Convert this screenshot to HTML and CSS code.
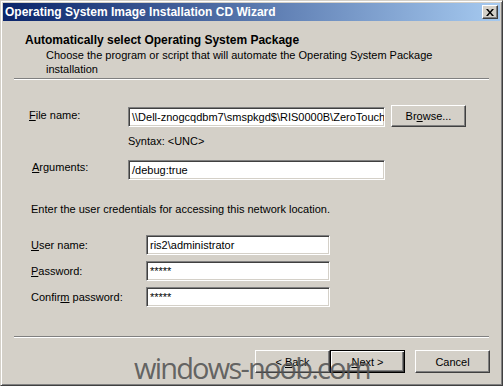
FILE: index.html
```html
<!DOCTYPE html>
<html lang="en">

<head>
    <meta charset="UTF-8">
    <title>Operating System Image Installation CD Wizard</title>
    <link rel="stylesheet" href="styles.css">
</head>

<body>
    <div class="window">
        <div class="title-bar">
            <span class="title-text">Operating System Image Installation CD Wizard</span>
            <span class="close-btn">
                <svg width="8" height="7" viewBox="0 0 8 7">
                    <path d="M0 0h2l2 2.5 2-2.5h2l-3 3.5 3 3.5h-2l-2-2.5-2 2.5h-2l3-3.5z" fill="#000"/>
                </svg>
            </span>
        </div>

        <div class="header">
            <h1>Automatically select Operating System Package</h1>
            <p>Choose the program or script that will automate the Operating System Package installation</p>
        </div>
        <div class="separator"></div>

        <div class="body">
            <div class="row file-row">
                <label class="lbl"><u>F</u>ile name:</label>
                <div class="field wide">\\Dell-znogcqdbm7\smspkgd$\RIS0000B\ZeroTouch</div>
                <button class="btn browse">Br<u>o</u>wse...</button>
            </div>
            <div class="hint">Syntax: &lt;UNC&gt;</div>
            <div class="row args-row">
                <label class="lbl"><u>A</u>rguments:</label>
                <div class="field wide">/debug:true</div>
            </div>

            <p class="creds-note">Enter the user credentials for accessing this network location.</p>

            <div class="creds">
                <label class="lbl"><u>U</u>ser name:</label>
                <div class="field short">ris2\administrator</div>
                <label class="lbl"><u>P</u>assword:</label>
                <div class="field short">*****</div>
                <label class="lbl">Confir<u>m</u> password:</label>
                <div class="field short">*****</div>
            </div>
        </div>

        <div class="separator"></div>

        <div class="footer">
            <button class="btn">&lt; <u>B</u>ack</button>
            <button class="btn default"><u>N</u>ext &gt;</button>
            <button class="btn cancel">Cancel</button>
        </div>

        <div class="watermark">windows-noob.com</div>
    </div>
</body>

</html>
```

FILE: styles.css
```css
/* Reset */
* {
    margin: 0;
    padding: 0;
    box-sizing: border-box;
}

body {
    font-family: 'Liberation Sans', Arial, sans-serif;
    font-size: 11px;
    color: #000;
    background-color: #d4d0c8;
}

/* Window frame */
.window {
    position: relative;
    width: 503px;
    height: 386px;
    padding: 2px;
    background-color: #d4d0c8;
    border: 1px solid;
    border-color: #d4d0c8 #404040 #404040 #d4d0c8;
    box-shadow: inset 1px 1px #fff, inset -1px -1px #808080;
    overflow: hidden;
}

.title-bar {
    height: 18px;
    display: flex;
    align-items: center;
    justify-content: space-between;
    padding: 0 2px;
    background: linear-gradient(to right, #0a246a, #a6caf0);
}

.title-text {
    color: #fff;
    font-weight: bold;
    font-size: 12px;
}

.close-btn {
    width: 16px;
    height: 14px;
    display: flex;
    align-items: center;
    justify-content: center;
    background-color: #d4d0c8;
    border: 1px solid;
    border-color: #fff #404040 #404040 #fff;
    box-shadow: inset -1px -1px #808080;
}

/* Header */
.header {
    height: 57px;
    padding: 12px 0 0 22px;
}

.header h1 {
    font-size: 12px;
    font-weight: bold;
    line-height: 14px;
}

.header p {
    margin-left: 21px;
    width: 400px;
    line-height: 14px;
    margin-top: 1px;
}

.separator {
    margin: 0 11px;
    height: 2px;
    border-top: 1px solid #808080;
    border-bottom: 1px solid #fff;
}

/* Form */
.body {
    height: 256px;
    padding: 25px 0 0 26px;
}

.row {
    display: flex;
    align-items: flex-start;
}

.lbl {
    display: block;
}

.file-row .lbl,
.args-row .lbl {
    width: 99px;
}

.file-row .lbl {
    margin-top: 4px;
}

.file-row .field {
    margin-top: 2px;
}

.args-row .lbl {
    padding-left: 3px;
    margin-top: 1px;
}

.field {
    height: 20px;
    line-height: 16px;
    padding: 1px 3px;
    background-color: #fff;
    border: 1px solid;
    border-color: #808080 #fff #fff #808080;
    box-shadow: inset 1px 1px #404040, inset -1px -1px #d4d0c8;
    white-space: nowrap;
    overflow: hidden;
}

.wide {
    width: 257px;
}

.short {
    width: 184px;
}

.btn {
    width: 75px;
    height: 23px;
    font-family: inherit;
    font-size: 11px;
    background-color: #d4d0c8;
    border: 1px solid;
    border-color: #fff #404040 #404040 #fff;
    box-shadow: inset -1px -1px #808080;
}

.browse {
    margin-left: 6px;
    height: 22px;
}

.hint {
    margin: 8px 0 0 99px;
    line-height: 13px;
}

.args-row {
    margin-top: 12px;
}

.creds-note {
    margin: 23px 0 0 2px;
    line-height: 13px;
}

.creds {
    display: grid;
    grid-template-columns: 115px 184px;
    row-gap: 6px;
    align-items: center;
    margin: 19px 0 0 2px;
}

/* Footer buttons */
.footer {
    display: flex;
    padding: 12px 0 0 252px;
}

.btn.default {
    border: 1px solid #000;
    box-shadow: inset 1px 1px #fff, inset -1px -1px #404040, inset -2px -2px #808080;
}

.btn.cancel {
    margin-left: 10px;
}

.watermark {
    position: absolute;
    left: 133px;
    top: 347px;
    font-family: 'Open Sans', sans-serif;
    font-size: 29px;
    line-height: 40px;
    letter-spacing: -1.8px;
    color: rgba(85, 85, 85, 0.9);
}
```
